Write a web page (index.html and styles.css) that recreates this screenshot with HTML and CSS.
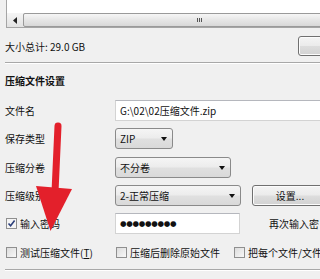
FILE: index.html
```html
<!DOCTYPE html>
<html lang="zh-CN">

<head>
    <meta charset="UTF-8">
    <meta name="viewport" content="width=device-width, initial-scale=1.0">
    <title>压缩文件设置</title>
    <link rel="stylesheet" href="styles.css">
</head>

<body>
    <div class="dialog">
        <!-- File list (only the bottom edge is visible) -->
        <div class="file-list">
            <div class="hscroll">
                <div class="scroll-btn">
                    <svg width="5" height="7" viewBox="0 0 5 7"><path d="M4 0 L0 3.5 L4 7 Z" fill="#222"/></svg>
                </div>
                <div class="scroll-thumb"><span class="grip"></span></div>
            </div>
        </div>

        <div class="summary">
            <span>大小总计: 29.0 GB</span>
            <button class="btn btn-edge"></button>
        </div>

        <div class="sep"></div>

        <div class="section-title">压缩文件设置</div>

        <div class="form">
            <div class="field-label">文件名</div>
            <div class="textbox textbox-path">G:\02\02压缩文件.zip</div>

            <div class="field-label">保存类型</div>
            <div class="field">
                <div class="combo combo-type">ZIP<span class="caret"></span></div>
            </div>

            <div class="field-label">压缩分卷</div>
            <div class="field">
                <div class="combo combo-split">不分卷<span class="caret"></span></div>
            </div>

            <div class="field-label">压缩级别</div>
            <div class="field">
                <div class="combo combo-level">2-正常压缩<span class="caret"></span></div>
                <button class="btn btn-settings">设置...</button>
            </div>

            <label class="check">
                <span class="box checked">
                    <svg width="9" height="9" viewBox="0 0 9 9"><path d="M1.5 4.5 L3.6 6.8 L7.6 1.6" fill="none" stroke="#2b3f7a" stroke-width="1.6"/></svg>
                </span>
                输入密码
            </label>
            <div class="field">
                <div class="textbox textbox-pass">●●●●●●●●●</div>
                <span class="hint">再次输入密</span>
            </div>
        </div>

        <div class="options">
            <label class="check opt-test"><span class="box"></span>测试压缩文件(<u>T</u>)</label>
            <label class="check opt-delete"><span class="box"></span>压缩后删除原始文件</label>
            <label class="check"><span class="box"></span>把每个文件/文件</label>
        </div>

        <div class="sep sep-bottom"></div>
    </div>

    <!-- Red arrow drawn over the dialog -->
    <svg class="annotation" width="320" height="279" viewBox="0 0 320 279">
        <path d="M58 126 L55 192" stroke="#e3202b" stroke-width="7" stroke-linecap="round" fill="none"/>
        <path d="M36 186 L72 189 L50.5 231 Z" fill="#e3202b"/>
    </svg>
</body>

</html>
```

FILE: styles.css
```css
body {
    margin: 0;
    background-color: #f0f0f0;
    font-family: "Noto Sans CJK SC", "Noto Sans", sans-serif;
    font-size: 10px;
    color: #111;
    overflow: hidden;
}

.dialog {
    padding-left: 5px;
    white-space: nowrap;
}

/* File list box, cut off at the top */
.file-list {
    height: 27px;
    margin-left: 1px;
    margin-right: -20px;
    background-color: #fff;
    border: 1px solid #a5a5a5;
    border-top: none;
    display: flex;
    flex-direction: column;
    justify-content: flex-end;
}

.hscroll {
    height: 14px;
    display: flex;
    background-color: #e9e9e9;
}

.scroll-btn {
    width: 16px;
    display: flex;
    align-items: center;
    justify-content: center;
    background: linear-gradient(#f5f5f5, #e2e2e2);
}

.scroll-thumb {
    flex: 1;
    position: relative;
    border: 1px solid #9a9a9a;
    border-radius: 2px;
    background: linear-gradient(#f6f6f6, #e6e6e6 50%, #d8d8d8);
}

.grip {
    position: absolute;
    left: 173px;
    top: 4px;
    width: 5px;
    height: 4px;
    background: repeating-linear-gradient(90deg, #555 0, #555 1px, transparent 1px, transparent 2px);
}

.summary {
    margin-top: 8px;
    height: 20px;
    display: flex;
    align-items: center;
    justify-content: space-between;
    margin-right: -40px;
}

.btn {
    font: inherit;
    color: #111;
    height: 21px;
    padding: 0;
    border: 1px solid #707070;
    border-radius: 3px;
    background: linear-gradient(#f4f4f4, #ebebeb 48%, #dddddd 52%, #d2d2d2);
    box-shadow: inset 0 0 0 1px #fcfcfc;
}

.btn-edge {
    width: 62px;
    height: 20px;
}

.sep {
    margin-top: 6px;
    border-top: 1px solid #a8a8a8;
    border-bottom: 1px solid #fff;
}

.section-title {
    margin-top: 9px;
    line-height: 16px;
    font-weight: bold;
}

.form {
    margin-top: 11px;
    display: grid;
    grid-template-columns: 110px 1fr;
    grid-auto-rows: 21px;
    row-gap: 7.25px;
    align-items: center;
}

.field {
    display: flex;
    align-items: center;
}

.textbox {
    height: 21px;
    box-sizing: border-box;
    line-height: 19px;
    padding-left: 4px;
    background-color: #fff;
    border: 1px solid #d3d3d3;
    border-top-color: #b5b7bd;
}

.textbox-path {
    margin-right: -20px;
}

.textbox-pass {
    width: 125px;
    flex-shrink: 0;
    font-family: "DejaVu Sans", sans-serif;
    font-size: 7.5px;
    letter-spacing: -0.3px;
}

.hint {
    margin-left: 29px;
}

.combo {
    position: relative;
    height: 21px;
    box-sizing: border-box;
    line-height: 19px;
    padding-left: 4px;
    border: 1px solid #8a8a8a;
    border-radius: 3px;
    background: linear-gradient(#f5f5f5, #ececec 48%, #e0e0e0 52%, #d9d9d9);
}

.combo-type {
    width: 58px;
}

.combo-split {
    width: 116px;
}

.combo-level {
    width: 126px;
    flex-shrink: 0;
}

.caret {
    position: absolute;
    right: 5px;
    top: 8px;
    border-left: 3px solid transparent;
    border-right: 3px solid transparent;
    border-top: 4px solid #111;
}

.btn-settings {
    width: 76px;
    margin-left: 11px;
    flex-shrink: 0;
}

.check {
    display: flex;
    align-items: center;
    flex-shrink: 0;
}

.box {
    width: 11px;
    height: 11px;
    box-sizing: border-box;
    flex-shrink: 0;
    margin-left: 1px;
    margin-right: 3px;
    border: 1px solid #8f8f8f;
    background: linear-gradient(135deg, #dcdcdc, #f8f8f8);
    display: flex;
    align-items: center;
    justify-content: center;
}

.box.checked {
    background: #f4f4f4;
}

.options {
    margin-top: 8px;
    height: 21px;
    display: flex;
    align-items: center;
}

.opt-test {
    width: 110px;
}

.opt-delete {
    width: 118px;
}

.sep-bottom {
    margin-top: 6px;
}

.annotation {
    position: absolute;
    top: 0;
    left: 0;
    pointer-events: none;
}
```
